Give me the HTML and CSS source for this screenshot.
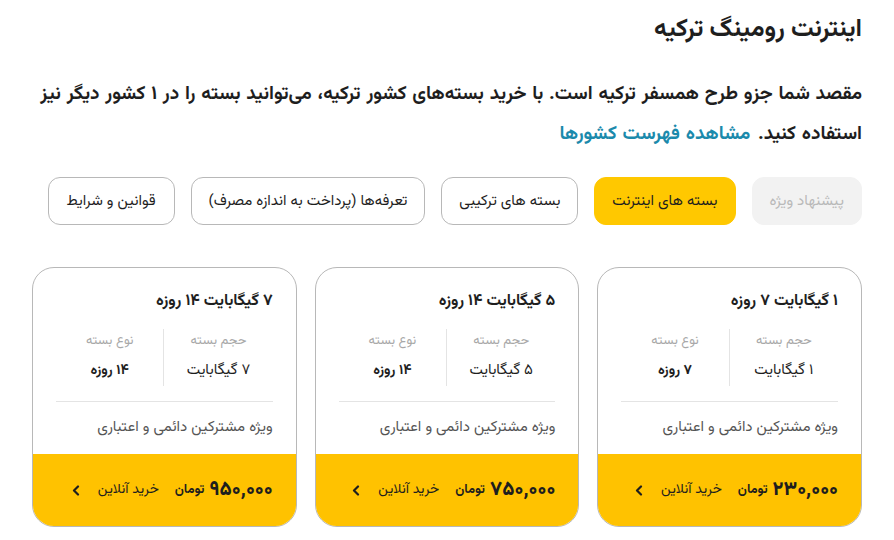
FILE: index.html
```html
<!DOCTYPE html>
<html lang="fa" dir="rtl">
<head>
<meta charset="utf-8">
<title>اینترنت رومینگ ترکیه</title>
<link rel="stylesheet" href="styles.css">
</head>
<body>
<main class="page">
  <h1 class="title">اینترنت رومینگ ترکیه</h1>
  <p class="intro">مقصد شما جزو طرح همسفر ترکیه است. با خرید بسته‌های کشور ترکیه، می‌توانید بسته را در ۱ کشور دیگر نیز استفاده کنید. <a class="link" href="#">مشاهده فهرست کشورها</a></p>

  <nav class="tabs">
    <button class="tab tab-disabled">پیشنهاد ویژه</button>
    <button class="tab tab-active">بسته های اینترنت</button>
    <button class="tab">بسته های ترکیبی</button>
    <button class="tab">تعرفه‌ها (پرداخت به اندازه مصرف)</button>
    <button class="tab tab-wide">قوانین و شرایط</button>
  </nav>

  <section class="cards">
    <article class="card">
      <div class="card-body">
        <h2 class="card-title">۱ گیگابایت ۷ روزه</h2>
        <div class="specs">
          <div class="spec">
            <span class="spec-label">حجم بسته</span>
            <span class="spec-value">۱ گیگابایت</span>
          </div>
          <div class="spec">
            <span class="spec-label">نوع بسته</span>
            <span class="spec-value spec-bold">۷ روزه</span>
          </div>
        </div>
        <p class="note">ویژه مشترکین دائمی و اعتباری</p>
      </div>
      <div class="card-foot">
        <span class="price">۲۳۰,۰۰۰</span>
        <span class="currency">تومان</span>
        <a class="buy" href="#">خرید آنلاین
          <svg class="chev" width="8" height="11" viewBox="0 0 8 11"><path d="M6 1.5 L2 5.5 L6 9.5" fill="none" stroke="#1e1e1e" stroke-width="2.2" stroke-linecap="round" stroke-linejoin="round"/></svg>
        </a>
      </div>
    </article>

    <article class="card">
      <div class="card-body">
        <h2 class="card-title">۵ گیگابایت ۱۴ روزه</h2>
        <div class="specs">
          <div class="spec">
            <span class="spec-label">حجم بسته</span>
            <span class="spec-value">۵ گیگابایت</span>
          </div>
          <div class="spec">
            <span class="spec-label">نوع بسته</span>
            <span class="spec-value spec-bold">۱۴ روزه</span>
          </div>
        </div>
        <p class="note">ویژه مشترکین دائمی و اعتباری</p>
      </div>
      <div class="card-foot">
        <span class="price">۷۵۰,۰۰۰</span>
        <span class="currency">تومان</span>
        <a class="buy" href="#">خرید آنلاین
          <svg class="chev" width="8" height="11" viewBox="0 0 8 11"><path d="M6 1.5 L2 5.5 L6 9.5" fill="none" stroke="#1e1e1e" stroke-width="2.2" stroke-linecap="round" stroke-linejoin="round"/></svg>
        </a>
      </div>
    </article>

    <article class="card">
      <div class="card-body">
        <h2 class="card-title">۷ گیگابایت ۱۴ روزه</h2>
        <div class="specs">
          <div class="spec">
            <span class="spec-label">حجم بسته</span>
            <span class="spec-value">۷ گیگابایت</span>
          </div>
          <div class="spec">
            <span class="spec-label">نوع بسته</span>
            <span class="spec-value spec-bold">۱۴ روزه</span>
          </div>
        </div>
        <p class="note">ویژه مشترکین دائمی و اعتباری</p>
      </div>
      <div class="card-foot">
        <span class="price">۹۵۰,۰۰۰</span>
        <span class="currency">تومان</span>
        <a class="buy" href="#">خرید آنلاین
          <svg class="chev" width="8" height="11" viewBox="0 0 8 11"><path d="M6 1.5 L2 5.5 L6 9.5" fill="none" stroke="#1e1e1e" stroke-width="2.2" stroke-linecap="round" stroke-linejoin="round"/></svg>
        </a>
      </div>
    </article>
  </section>
</main>
</body>
</html>
```

FILE: styles.css
```css
* { box-sizing: border-box; }

html, body {
  margin: 0;
  padding: 0;
  background: #ffffff;
}

body {
  font-family: "Vazirmatn", "Noto Sans Arabic", "DejaVu Sans", sans-serif;
  color: #1e1e1e;
  direction: rtl;
}

.page {
  padding: 13px 32px 0 32px;
}

.title {
  margin: 0;
  font-size: 25px;
  font-weight: 700;
  line-height: 34px;
}

.intro {
  margin: 28px 0 0 0;
  font-size: 19px;
  word-spacing: 1px;
  font-weight: 700;
  line-height: 40px;
}

.link {
  color: #1b8aac;
  text-decoration: none;
  display: inline-block;
  margin-right: 2px;
}

.tabs {
  display: flex;
  gap: 16px;
  margin-top: 22px;
}

.tab {
  font-family: inherit;
  height: 48px;
  padding: 0 17px;
  border: 1px solid #b8b8b8;
  border-radius: 12px;
  background: #ffffff;
  color: #1e1e1e;
  font-size: 15px;
  white-space: nowrap;
}

.tab-wide {
  padding: 0 18px;
}

.tab-disabled {
  background: #f2f2f2;
  border-color: #f2f2f2;
  color: #b9b9b9;
}

.tab-active {
  background: #ffc800;
  border-color: #ffc800;
}

.cards {
  display: grid;
  grid-template-columns: repeat(3, 1fr);
  gap: 18px;
  margin-top: 42px;
}

.card {
  height: 260px;
  border: 1px solid #b8b8b8;
  border-radius: 22px;
  overflow: hidden;
  display: flex;
  flex-direction: column;
}

.card-body {
  flex: 1;
  padding: 21px 23px 0 23px;
}

.card-title {
  margin: 0;
  font-size: 16px;
  font-weight: 700;
  line-height: 26px;
}

.specs {
  display: grid;
  grid-template-columns: 1fr 1fr;
  margin-top: 14px;
  padding-bottom: 15px;
  border-bottom: 1px solid #e4e4e4;
}

.spec {
  display: flex;
  flex-direction: column;
  align-items: center;
  gap: 9px;
  padding: 2px 0 4px;
}

.spec + .spec {
  border-right: 1px solid #e4e4e4;
}

.spec-label {
  font-size: 13px;
  color: #a8a8a8;
  line-height: 20px;
}

.spec-value {
  font-size: 15px;
  line-height: 22px;
}

.spec-bold {
  font-weight: 700;
  font-size: 14px;
}

.note {
  margin: 14px 0 0 0;
  font-size: 15px;
  color: #555555;
  line-height: 24px;
}

.card-foot {
  height: 72px;
  background: #ffc200;
  display: flex;
  align-items: center;
  padding: 0 23px 0 23px;
}

.price {
  font-size: 20px;
  font-weight: 800;
}

.currency {
  font-size: 13px;
  font-weight: 700;
  margin-right: 5px;
}

.buy {
  margin-right: 16px;
  font-size: 14px;
  color: #1e1e1e;
  text-decoration: none;
  display: flex;
  align-items: center;
  gap: 18px;
}

.chev { display: block; }
```
